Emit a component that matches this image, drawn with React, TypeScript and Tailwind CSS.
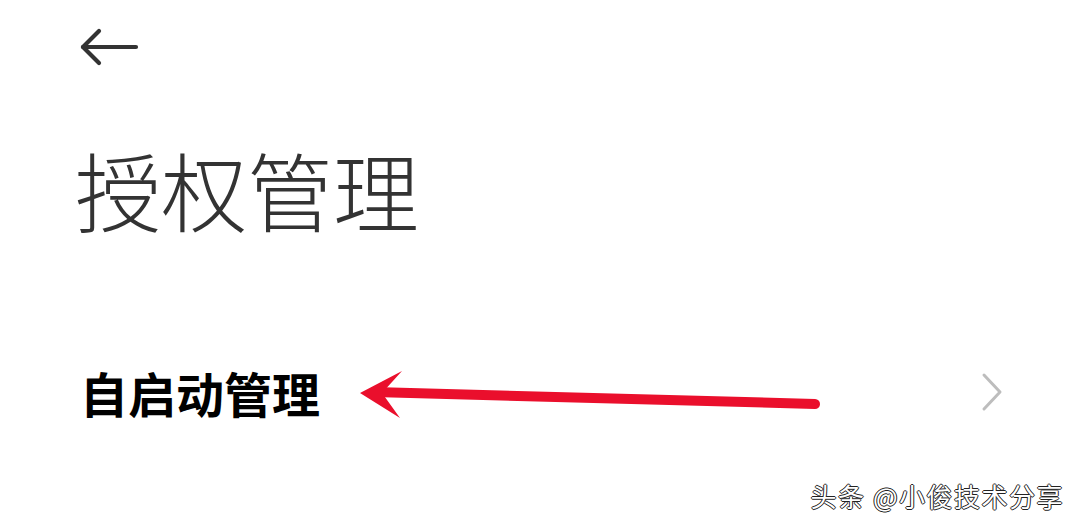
import React from 'react';

const cjk = { fontFamily: '"Noto Sans CJK SC", "Noto Sans", sans-serif' };

const BackArrow = () => (
  <svg width="60" height="40" viewBox="0 0 60 40" fill="none" stroke="#333333" strokeWidth="4.2" strokeLinecap="round" strokeLinejoin="round">
    <path d="M3 19 H56" />
    <path d="M19 3 L3 19 L19 35" />
  </svg>
);

const Chevron = () => (
  <svg width="24" height="40" viewBox="0 0 24 40" fill="none" stroke="#bdbdbd" strokeWidth="3" strokeLinecap="round" strokeLinejoin="round">
    <path d="M4 3 L20 20 L4 37" />
  </svg>
);

// red annotation arrow drawn over the screenshot
const RedArrow = () => (
  <svg className="absolute left-0 top-0 pointer-events-none" width="1080" height="525" viewBox="0 0 1080 525">
    <path d="M374 392 L815 404" stroke="#ea0f2c" strokeWidth="10" strokeLinecap="round" fill="none" />
    <path d="M360 393 L402 371 L382 393 L400 418 Z" fill="#ea0f2c" />
  </svg>
);

export default function App() {
  return (
    <div className="relative w-[1080px] h-[525px] overflow-hidden bg-white" style={cjk}>
      <div className="flex flex-col pl-[80px] pt-[28px]">
        <div className="w-[60px] h-[40px]">
          <BackArrow />
        </div>
        <h1 className="mt-[78px] -ml-[5px] text-[86px] leading-none font-light text-[#333333]">授权管理</h1>
        <div className="mt-[136px] flex items-center justify-between pr-[76px]">
          <span className="text-[48px] leading-none font-bold text-black">自启动管理</span>
          <Chevron />
        </div>
      </div>
      <RedArrow />
      <div
        className="absolute right-[16px] bottom-[16px] text-[26px] leading-none tracking-[1.5px] text-white"
        style={{ textShadow: '1px 0 0 #222, -1px 0 0 #222, 0 1px 0 #222, 0 -1px 0 #222' }}
      >
        头条 @小俊技术分享
      </div>
    </div>
  );
}
